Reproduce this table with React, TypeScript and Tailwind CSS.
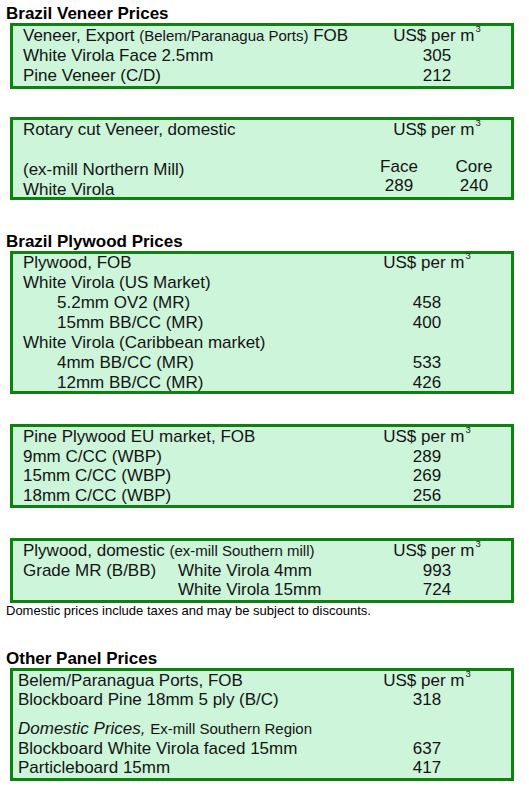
import React from "react";

const Sup = () => (
  <span className="relative -top-[9px] ml-[1px] text-[9.5px] leading-none">3</span>
);

const Usd = () => (
  <>
    US$ per m
    <Sup />
  </>
);

function Box({ children, className = "" }: { children: React.ReactNode; className?: string }) {
  return (
    <div className={`ml-[10px] w-[504px] border-[3px] border-[#0d820f] bg-[#ccf5da] ${className}`}>
      {children}
    </div>
  );
}

function Row({
  label,
  value,
  h = "h-[20px] leading-[20px]",
  pl = "pl-[10px]",
  mr = "mr-[30px]",
}: {
  label: React.ReactNode;
  value?: React.ReactNode;
  h?: string;
  pl?: string;
  mr?: string;
}) {
  return (
    <div className={`flex whitespace-nowrap ${h}`}>
      <div className={`flex-1 ${pl}`}>{label}</div>
      <div className={`w-[88px] text-center ${mr}`}>{value}</div>
    </div>
  );
}

const Title = ({ children, className = "" }: { children: React.ReactNode; className?: string }) => (
  <div className={`h-[19px] pl-[6px] text-[17px] font-bold leading-[19px] text-black ${className}`}>
    {children}
  </div>
);

export default function App() {
  const r3 = "h-[20px] leading-[20px]";
  const r4 = "h-[19.5px] leading-[19.5px]";
  return (
    <div
      className="min-h-[791px] w-[529px] bg-white pt-[4px] text-[17px] text-[#141414]"
      style={{ fontFamily: '"Liberation Sans", Arial, sans-serif' }}
    >
      <Title>Brazil Veneer Prices</Title>

      <Box>
        <Row
          label={
            <>
              Veneer, Export <span className="text-[15px]">(Belem/Paranagua Ports)</span> FOB
            </>
          }
          value={<Usd />}
        />
        <Row label="White Virola Face 2.5mm" value="305" />
        <Row label="Pine Veneer (C/D)" value="212" />
      </Box>

      <Box className="mt-[28px]">
        <Row label="Rotary cut Veneer, domestic" value={<Usd />} />
        <div className="flex whitespace-nowrap">
          <div className="flex-1 pl-[10px] pt-[20px]">
            <div className="h-[19.5px] leading-[19.5px]">(ex-mill Northern Mill)</div>
            <div className="h-[17.5px] leading-[19.5px]">White Virola</div>
          </div>
          <div className="mr-[7px] flex gap-[15px] pt-[17px]">
            <div className="w-[60px] text-center">
              <div className="h-[19px] leading-[20px]">Face</div>
              <div className="h-[20px] leading-[20px]">289</div>
            </div>
            <div className="w-[60px] text-center">
              <div className="h-[19px] leading-[20px]">Core</div>
              <div className="h-[20px] leading-[20px]">240</div>
            </div>
          </div>
        </div>
      </Box>

      <Title className="mt-[32px]">Brazil Plywood Prices</Title>

      <Box>
        <div className="-mb-[2px] -mt-[1px]">
          <Row h={r3} mr="mr-[40px]" label="Plywood, FOB" value={<Usd />} />
          <Row h={r3} mr="mr-[40px]" label="White Virola (US Market)" />
          <Row h={r3} mr="mr-[40px]" pl="pl-[44px]" label="5.2mm OV2 (MR)" value="458" />
          <Row h={r3} mr="mr-[40px]" pl="pl-[44px]" label="15mm BB/CC (MR)" value="400" />
          <Row h={r3} mr="mr-[40px]" label="White Virola (Caribbean market)" />
          <Row h={r3} mr="mr-[40px]" pl="pl-[44px]" label="4mm BB/CC (MR)" value="533" />
          <Row h={r3} mr="mr-[40px]" pl="pl-[44px]" label="12mm BB/CC (MR)" value="426" />
        </div>
      </Box>

      <Box className="mt-[30px]">
        <Row h={r4} mr="mr-[40px]" label="Pine Plywood EU market, FOB" value={<Usd />} />
        <Row h={r4} mr="mr-[40px]" label="9mm C/CC (WBP)" value="289" />
        <Row h={r4} mr="mr-[40px]" label="15mm C/CC (WBP)" value="269" />
        <Row h={r4} mr="mr-[40px]" label="18mm C/CC (WBP)" value="256" />
      </Box>

      <Box className="mt-[30px]">
        <Row
          h={r4}
          label={
            <>
              Plywood, domestic <span className="text-[15px]">(ex-mill Southern mill)</span>
            </>
          }
          value={<Usd />}
        />
        <Row
          h={r4}
          label={
            <div className="flex">
              <div className="w-[155px]">Grade MR (B/BB)</div>
              <div>White Virola 4mm</div>
            </div>
          }
          value="993"
        />
        <Row
          h={r4}
          label={
            <div className="flex">
              <div className="w-[155px]" />
              <div>White Virola 15mm</div>
            </div>
          }
          value="724"
        />
      </Box>
      <div className="pl-[6px] text-[13px] leading-[15px] text-black">
        Domestic prices include taxes and may be subject to discounts.
      </div>

      <Title className="mt-[31px]">Other Panel Prices</Title>

      <Box>
        <Row h={r4} pl="pl-[5px]" mr="mr-[40px]" label="Belem/Paranagua Ports, FOB" value={<Usd />} />
        <Row h={r4} pl="pl-[5px]" mr="mr-[40px]" label="Blockboard Pine 18mm 5 ply (B/C)" value="318" />
        <div className="mt-[9.5px]">
          <Row
            h={r4}
            pl="pl-[5px]"
            mr="mr-[40px]"
            label={
              <>
                <span className="italic">Domestic Prices,</span>{" "}
                <span className="text-[15px]">Ex-mill Southern Region</span>
              </>
            }
          />
          <Row h={r4} pl="pl-[5px]" mr="mr-[40px]" label="Blockboard White Virola faced 15mm" value="637" />
          <Row h={r4} pl="pl-[5px]" mr="mr-[40px]" label="Particleboard 15mm" value="417" />
        </div>
      </Box>
    </div>
  );
}
